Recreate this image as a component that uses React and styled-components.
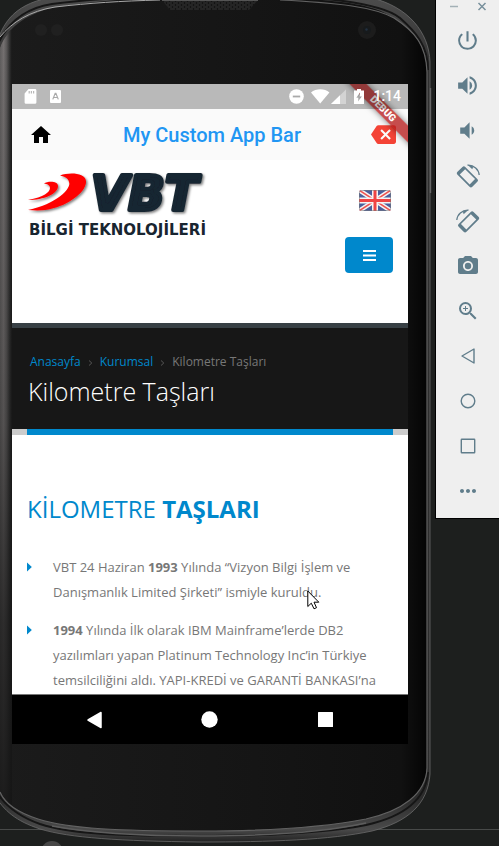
import React from "react";
import styled, { createGlobalStyle } from "styled-components";
import {
  MdPowerSettingsNew,
  MdVolumeUp,
  MdVolumeDown,
  MdPhotoCamera,
  MdZoomIn,
  MdMoreHoriz,
  MdHome,
  MdBackspace,
} from "react-icons/md";

const sans = `"Open Sans", "Noto Sans", sans-serif`;
const roboto = `Roboto, "Noto Sans", sans-serif`;
const blue = "#0088cc";

const GlobalStyle = createGlobalStyle`
  * { box-sizing: border-box; }
  html, body, #root { height: 100%; margin: 0; }
  body { background: #1d1f1e; overflow: hidden; }
  button { border: 0; padding: 0; background: none; cursor: pointer; }
  svg { display: block; }
`;

const Page = styled.div`
  display: flex;
  align-items: flex-start;
  height: 100vh;
  background: linear-gradient(#484a49, #484a49) 0 calc(100% - 16px) / 100% 1px no-repeat #1d1f1e;
`;

const Device = styled.main`
  position: relative;
  display: flex;
  flex: 1;
  min-width: 0;
  height: 100%;
  padding: 84px 27px 102px 12px;
`;

const Shell = styled.svg`
  position: absolute;
  inset: 0;
  width: 100%;
  height: 100%;
`;

const Screen = styled.div`
  position: relative;
  display: flex;
  flex-direction: column;
  flex: 1;
  min-width: 0;
  overflow: hidden;
  background: #fafafa;
`;

const StatusBar = styled.div`
  position: relative;
  z-index: 2;
  display: flex;
  align-items: center;
  justify-content: space-between;
  height: 25px;
  padding: 0 7px 0 12px;
  background: rgba(0, 0, 0, 0.26);
  color: #fff;
  font: 500 14px/25px ${roboto};
`;

const StatusGroup = styled.div`
  display: flex;
  align-items: center;
  gap: ${(p) => p.$gap}px;
`;

const Clock = styled.time`
  padding-left: 2px;
`;

const AppBar = styled.header`
  display: flex;
  align-items: center;
  justify-content: space-between;
  height: 51px;
  padding: 0 12px 0 17px;
  background: #fafafa;
`;

const AppTitle = styled.h1`
  margin: 0;
  color: #2196f3;
  font: 500 20px/24px ${roboto};
`;

const BarButton = styled.button`
  color: ${(p) => p.$color};
`;

const DebugBanner = styled.div`
  position: absolute;
  z-index: 1;
  top: 19px;
  right: -25px;
  width: 100px;
  transform: rotate(45deg);
  background: rgba(183, 28, 28, 0.78);
  box-shadow: 0 0 6px rgba(0, 0, 0, 0.5);
  color: #fff;
  text-align: center;
  font: 900 10px/12px ${roboto};
`;

const WebView = styled.div`
  flex: 1;
  min-height: 0;
  overflow: hidden;
  background: #fff;
  font-family: ${sans};
`;

const SiteHeader = styled.div`
  display: flex;
  justify-content: space-between;
  height: 163px;
  padding: 12px 15px 0 15px;
`;

const SiteTools = styled.div`
  display: flex;
  flex-direction: column;
  align-items: flex-end;
  gap: 26px;
  padding-top: 18px;
`;

const LanguageButton = styled.button`
  margin-right: 2px;
`;

const MenuButton = styled.button`
  display: grid;
  place-items: center;
  width: 48px;
  height: 36px;
  border-radius: 4px;
  background: ${blue};
`;

const PageHeader = styled.section`
  height: 106px;
  padding: 25px 16px 0;
  border-top: 5px solid #384045;
  background: #171717;
`;

const Breadcrumb = styled.nav`
  display: flex;
  align-items: center;
  padding-left: 2px;
  color: #777;
  font-size: 12px;
  line-height: 18px;
`;

const Crumb = styled.a`
  color: ${blue};
  text-decoration: none;
`;

const Chevron = styled.svg`
  margin: 2px 7px 0;
`;

const PageTitle = styled.h2`
  margin: 2px 0 0;
  color: #fff;
  font-size: 25px;
  font-weight: 300;
  line-height: 36px;
`;

const Accent = styled.div`
  height: 6px;
  padding: 0 15px;
  background: #ccc;
`;

const AccentFill = styled.div`
  height: 100%;
  background: ${blue};
`;

const Article = styled.article`
  padding: 55px 15px 0;
`;

const SectionTitle = styled.h3`
  margin: 0;
  color: ${blue};
  font-size: 24px;
  font-weight: 400;
  line-height: 38px;
`;

const Milestones = styled.ul`
  display: flex;
  flex-direction: column;
  gap: 13px;
  margin: 27px 0 0;
  padding: 0;
  list-style: none;
`;

const Milestone = styled.li`
  display: flex;
  gap: 21px;
  color: #777;
  font-size: 13px;
  line-height: 25px;
`;

const Marker = styled.svg`
  flex: none;
  margin-top: 7px;
`;

const NavBar = styled.nav`
  display: flex;
  align-items: center;
  justify-content: space-around;
  height: 50px;
  padding: 0 25px;
  border-top: 1px solid #777;
  background: #000;
`;

const NavButton = styled.button`
  display: grid;
  place-items: center;
  width: 48px;
  height: 40px;
`;

const Toolbar = styled.aside`
  position: relative;
  width: 64px;
  height: 519px;
  border-left: 1px solid #000;
  border-bottom: 1px solid #000;
  background: #efefef;
  color: #607d8b;
`;

const WindowControls = styled.div`
  display: flex;
  justify-content: space-between;
  height: 18px;
  padding: 1px 11px 0 12px;
`;

const Tools = styled.div`
  display: flex;
  flex-direction: column;
`;

const ToolButton = styled.button`
  display: grid;
  place-items: center;
  width: 100%;
  height: 45px;
  color: inherit;
`;

const WindowButton = styled.button`
  width: 12px;
  height: 11px;
`;

const Pointer = styled.svg`
  position: absolute;
  z-index: 3;
  left: 295px;
  top: 506px;
`;

const OUTER =
  "M-6 60 C-2 24 14 5 48 -2 L372 -2 C408 7 429 32 430 62 L430 774 C428 804 408 822 372 831 C330 840 270 842 200 842 C120 841 70 838 40 829 C16 821 4 811 -6 794Z";
const FACE =
  "M-3 60 C0 36 18 16 52 8 C90 1 130 -1 160 -3 L262 -3 C330 -1 372 3 392 17 C414 32 426 44 427 72 L427 768 C426 794 402 812 366 819 C330 826 280 831 200 831 C120 831 70 829 38 819 C16 812 2 800 -3 786Z";

function PhoneShell() {
  return (
    <Shell viewBox="0 0 435 846" preserveAspectRatio="none" aria-hidden="true">
      <defs>
        <linearGradient id="rim" x1="0" y1="0" x2="0" y2="1">
          <stop offset="0" stopColor="#4c4c4c" />
          <stop offset="0.08" stopColor="#303030" />
          <stop offset="0.95" stopColor="#2c2c2c" />
          <stop offset="0.985" stopColor="#4a4a4a" />
          <stop offset="1" stopColor="#222" />
        </linearGradient>
        <linearGradient id="face" x1="0" y1="0" x2="1" y2="0">
          <stop offset="0" stopColor="#1b1b1b" />
          <stop offset="0.6" stopColor="#151515" />
          <stop offset="0.94" stopColor="#111" />
          <stop offset="1" stopColor="#040404" />
        </linearGradient>
        <linearGradient id="side" x1="0" y1="0" x2="1" y2="0">
          <stop offset="0" stopColor="#605e5e" />
          <stop offset="0.3" stopColor="#757171" />
          <stop offset="0.55" stopColor="#5a5858" />
          <stop offset="0.8" stopColor="#303030" />
          <stop offset="1" stopColor="#181818" />
        </linearGradient>
        <linearGradient id="fade" x1="0" y1="0" x2="0" y2="1">
          <stop offset="0" stopColor="#161616" stopOpacity="0" />
          <stop offset="0.5" stopColor="#161616" stopOpacity="0.35" />
          <stop offset="0.75" stopColor="#161616" stopOpacity="0.75" />
          <stop offset="1" stopColor="#161616" stopOpacity="0.95" />
        </linearGradient>
        <pattern id="mesh" width="6" height="4" patternUnits="userSpaceOnUse">
          <rect width="6" height="4" fill="#252525" />
          <circle cx="1.5" cy="1" r="0.8" fill="#0b0b0b" />
          <circle cx="4.5" cy="3" r="0.8" fill="#0b0b0b" />
        </pattern>
        <clipPath id="faceClip"><path d={FACE} /></clipPath>
      </defs>
      <path d={OUTER} fill="url(#rim)" stroke="#6b6b6b" strokeWidth="0.8" />
      <path d="M-2 44 C8 22 26 8 52 4 C90 -1 120 -2 140 -3 M300 -3 C350 0 385 6 400 18 C416 32 428 46 428 70 M428 772 C426 800 402 817 366 825 C330 832 280 836 200 836 C120 836 70 834 40 824 C18 816 6 806 -2 794" fill="none" stroke="#161616" strokeWidth="2" />
      <path d={FACE} fill="url(#face)" />
      <g clipPath="url(#faceClip)">
        <rect y="30" width="12" height="790" fill="url(#side)" />
        <rect y="30" width="12" height="790" fill="url(#fade)" />
      </g>
      <path d="M0 37 C12 22 30 11 55 7 C90 3 120 1 160 0" fill="none" stroke="#a8a8a8" strokeWidth="1" />
      <path d="M280 0 C340 3 374 7 394 18 C416 32 426 46 427 72 L427 768 C426 794 402 811 366 819 C330 826 280 831 200 831 C120 831 70 829 38 819 C16 812 4 802 0 792" fill="none" stroke="#626262" strokeWidth="1.2" />
      <path d="M52 826 C95 834 150 836 200 836 C270 836 325 832 366 823" fill="none" stroke="#5d5d5d" strokeWidth="1.5" />
      <path d="M162 0 L170 10 H249 L258 0Z" fill="url(#mesh)" />
      <path d="M162 0.5 H258" stroke="#555" />
      <circle cx="41" cy="30" r="6" fill="#202020" />
      <circle cx="57" cy="30" r="6" fill="#202020" />
      <circle cx="367" cy="30" r="9" fill="#1c1c1c" />
      <circle cx="367" cy="30" r="4" fill="#171a1c" />
      <circle cx="366.5" cy="29.5" r="1.2" fill="#223040" />
      <path d="M430.5 88 V193" stroke="#666" strokeWidth="1.4" />
      <circle cx="52" cy="852" r="11" fill="#474747" />
    </Shell>
  );
}

function StatusLeft() {
  return (
    <StatusGroup $gap={13}>
      <svg width="13" height="15" viewBox="0 0 13 15" fill="#fff" aria-label="SD card">
        <path fillRule="evenodd" d="M4.5 0H11a1.4 1.4 0 0 1 1.4 1.4v12A1.4 1.4 0 0 1 11 14.8H2a1.4 1.4 0 0 1-1.4-1.4V4.4ZM4.6 2v2.4h1.2V2Zm2.2 0v2.4H8V2ZM9 2v2.4h1.2V2Z" />
      </svg>
      <svg width="11" height="13" viewBox="0 0 11 13" aria-label="Keyboard">
        <rect width="11" height="13" rx="1" fill="#fff" />
        <path d="M2.8 9.4 5.2 3.4h.7l2.4 6M3.7 7.5h3.7" stroke="#aaa" strokeWidth="1.2" fill="none" />
      </svg>
    </StatusGroup>
  );
}

function StatusRight() {
  return (
    <StatusGroup $gap={7}>
      <svg width="15" height="15" viewBox="0 0 15 15" aria-label="Do not disturb">
        <circle cx="7.5" cy="7.5" r="7.3" fill="#fff" />
        <path d="M3.8 7.5h7.4" stroke="#aaa" strokeWidth="1.8" />
      </svg>
      <svg width="36" height="15" viewBox="0 0 36 15" aria-label="Signal">
        <path d="M0 3.5C5-.9 13.6-.9 18.4 3.5L9.2 14.5Z" fill="#fff" />
        <path d="M20 15 35 .5V15Z" fill="#d3d3d3" />
        <path d="M20 15 29 6.3V15Z" fill="#fff" />
      </svg>
      <svg width="10" height="15" viewBox="0 0 10 15" aria-label="Battery charging">
        <path fillRule="evenodd" d="M3 0h4v1.5h3V15H0V1.5h3ZM6 3.5 2.3 8.7h2L4 12.5 7.8 7.5H5.6Z" fill="#fff" />
      </svg>
      <Clock>1:14</Clock>
    </StatusGroup>
  );
}

function VbtLogo() {
  return (
    <svg width="194" height="72" viewBox="0 0 194 72" role="img" aria-label="VBT Bilgi Teknolojileri">
      <defs>
        <filter id="soft" x="-10%" y="-10%" width="125%" height="130%">
          <feDropShadow dx="1.5" dy="1.5" stdDeviation="1" floodColor="#000" floodOpacity="0.5" />
        </filter>
      </defs>
      <g filter="url(#soft)">
        <path d="M1 38C30 32 45 16 42 10 41 6 38 4.5 33 3.5 43 0 58 1 59 9 60 19 43 32 27 36 17 39 9 38.5 1 38Z" fill="#f00" />
        <path d="M1 28C17 25 23 20 23 16 23 13 20 12 17 11.5 21 9 31 9 31 14 31 22 17 28 1 28Z" fill="#f00" />
        <text x="64" y="38" fontFamily="'DejaVu Sans', sans-serif" fontWeight="700" fontStyle="italic" fontSize="48" fill="#182530" stroke="#182530" strokeWidth="4" strokeLinejoin="round">VBT</text>
      </g>
      <text x="2" y="63" fontFamily="'DejaVu Sans', sans-serif" fontWeight="700" fontSize="15" fill="#182530">BİLGİ TEKNOLOJİLERİ</text>
    </svg>
  );
}

function UkFlag() {
  return (
    <svg width="32" height="21" viewBox="0 0 32 21" aria-hidden="true">
      <clipPath id="flag"><rect width="32" height="21" rx="2.5" /></clipPath>
      <g clipPath="url(#flag)">
        <rect width="32" height="21" fill="#4a5f9c" />
        <path d="M0 0 32 21M32 0 0 21" stroke="#f4f4f4" strokeWidth="4.5" />
        <path d="M0 0 32 21M32 0 0 21" stroke="#ef5350" strokeWidth="1.5" />
        <path d="M16 0V21M0 10.5H32" stroke="#f4f4f4" strokeWidth="6" />
        <path d="M16 0V21M0 10.5H32" stroke="#f04444" strokeWidth="3" />
      </g>
      <rect x="0.5" y="0.5" width="31" height="20" rx="2" fill="none" stroke="#777" strokeOpacity="0.5" />
    </svg>
  );
}

function RotateIcon({ flipped }) {
  return (
    <svg width="24" height="24" viewBox="0 0 24 24" aria-hidden="true">
      <g transform={flipped ? "translate(24 0) scale(-1 1)" : undefined}>
        <path
          transform="translate(11.4 12.8) rotate(45)"
          fill="currentColor"
          fillRule="evenodd"
          d="M-8.5-5.5h17a2 2 0 0 1 2 2v7a2 2 0 0 1-2 2h-17a2 2 0 0 1-2-2v-7a2 2 0 0 1 2-2ZM-7-3.8v7.6H7v-7.6Z"
        />
        <path d="M11.5 1.2C18 .8 22.8 5.5 23.2 11" fill="none" stroke="currentColor" strokeWidth="1.3" />
        <path d="M11.5 .8 16.3 5.2 17.3 2.5Z" fill="currentColor" />
      </g>
    </svg>
  );
}

const Outline = ({ children }) => (
  <svg width="24" height="24" viewBox="0 0 24 24" fill="none" stroke="currentColor" strokeWidth="1.4" strokeLinejoin="round" aria-hidden="true">
    {children}
  </svg>
);

const tools = [
  ["Power", <MdPowerSettingsNew size={25} />],
  ["Volume up", <MdVolumeUp size={25} />],
  ["Volume down", <MdVolumeDown size={25} />],
  ["Rotate left", <RotateIcon />],
  ["Rotate right", <RotateIcon flipped />],
  ["Take screenshot", <MdPhotoCamera size={24} />],
  ["Zoom", <MdZoomIn size={24} />],
  ["Back", <Outline><path d="M18 5V19L6 12Z" /></Outline>],
  ["Home", <Outline><circle cx="12" cy="12" r="6.8" /></Outline>],
  ["Overview", <Outline><rect x="5.3" y="5.3" width="13.4" height="13.4" rx="0.5" /></Outline>],
  ["More", <MdMoreHoriz size={24} />],
];

const milestones = [
  <>VBT 24 Haziran <b>1993</b> Yılında “Vizyon Bilgi İşlem ve Danışmanlık Limited Şirketi” ismiyle kuruldu.</>,
  <><b>1994</b> Yılında İlk olarak IBM Mainframe’lerde DB2 yazılımları yapan Platinum Technology Inc’in Türkiye temsilciliğini aldı. YAPI-KREDİ ve GARANTİ BANKASI’na</>,
];

const Separator = () => (
  <Chevron width="5" height="6" viewBox="0 0 5 6" aria-hidden="true">
    <path d="M1 .5 3.8 3 1 5.5" fill="none" stroke="#555" />
  </Chevron>
);

function WindowControl({ label, children }) {
  return (
    <WindowButton aria-label={label}>
      <svg width="12" height="11" viewBox="0 0 12 11" aria-hidden="true">{children}</svg>
    </WindowButton>
  );
}

export default function App() {
  return (
    <Page>
      <GlobalStyle />
      <Device>
        <PhoneShell />
        <Screen>
          <StatusBar>
            <StatusLeft />
            <StatusRight />
          </StatusBar>
          <DebugBanner>DEBUG</DebugBanner>
          <AppBar>
            <BarButton $color="#000" aria-label="Home"><MdHome size={24} /></BarButton>
            <AppTitle>My Custom App Bar</AppTitle>
            <BarButton $color="#f44336" aria-label="Close"><MdBackspace size={25} /></BarButton>
          </AppBar>
          <WebView>
            <SiteHeader>
              <VbtLogo />
              <SiteTools>
                <LanguageButton aria-label="English"><UkFlag /></LanguageButton>
                <MenuButton aria-label="Menu">
                  <svg width="13" height="11" viewBox="0 0 13 11" aria-hidden="true">
                    <path d="M0 1H13M0 5.5H13M0 10H13" stroke="#fff" strokeWidth="2" />
                  </svg>
                </MenuButton>
              </SiteTools>
            </SiteHeader>
            <PageHeader>
              <Breadcrumb aria-label="Breadcrumb">
                <Crumb href="#anasayfa">Anasayfa</Crumb>
                <Separator />
                <Crumb href="#kurumsal">Kurumsal</Crumb>
                <Separator />
                <span>Kilometre Taşları</span>
              </Breadcrumb>
              <PageTitle>Kilometre Taşları</PageTitle>
            </PageHeader>
            <Accent><AccentFill /></Accent>
            <Article>
              <SectionTitle>KİLOMETRE <b>TAŞLARI</b></SectionTitle>
              <Milestones>
                {milestones.map((text, i) => (
                  <Milestone key={i}>
                    <Marker width="5" height="10" viewBox="0 0 5 10" aria-hidden="true">
                      <path d="M0 .5 4.8 5 0 9.5Z" fill={blue} />
                    </Marker>
                    <span>{text}</span>
                  </Milestone>
                ))}
              </Milestones>
            </Article>
          </WebView>
          <NavBar aria-label="System">
            <NavButton aria-label="Back">
              <svg width="17" height="18" viewBox="0 0 17 18"><path d="M15 1.5V16.5L2 9Z" fill="#fff" stroke="#fff" strokeWidth="1.5" strokeLinejoin="round" /></svg>
            </NavButton>
            <NavButton aria-label="Home">
              <svg width="17" height="17" viewBox="0 0 17 17"><circle cx="8.5" cy="8.5" r="8.2" fill="#fff" /></svg>
            </NavButton>
            <NavButton aria-label="Overview">
              <svg width="15" height="15" viewBox="0 0 15 15"><rect width="15" height="15" rx="0.5" fill="#fff" /></svg>
            </NavButton>
          </NavBar>
          <Pointer width="13" height="20" viewBox="0 0 13 20" aria-hidden="true">
            <path d="M.8 1V16.5L4.3 13.2 7 18.8 9.5 17.7 7 12.2H11.8Z" fill="#fff" stroke="#000" strokeWidth="1" />
          </Pointer>
        </Screen>
      </Device>
      <Toolbar>
        <WindowControls>
          <WindowControl label="Minimize"><path d="M2 5.5H10" stroke="#a3b0b6" strokeWidth="1.5" /></WindowControl>
          <WindowControl label="Close"><path d="M2.5 2 9.5 9M9.5 2 2.5 9" stroke="#78909c" strokeWidth="1.5" /></WindowControl>
        </WindowControls>
        <Tools>
          {tools.map(([label, icon]) => (
            <ToolButton key={label} aria-label={label} title={label}>{icon}</ToolButton>
          ))}
        </Tools>
      </Toolbar>
    </Page>
  );
}
